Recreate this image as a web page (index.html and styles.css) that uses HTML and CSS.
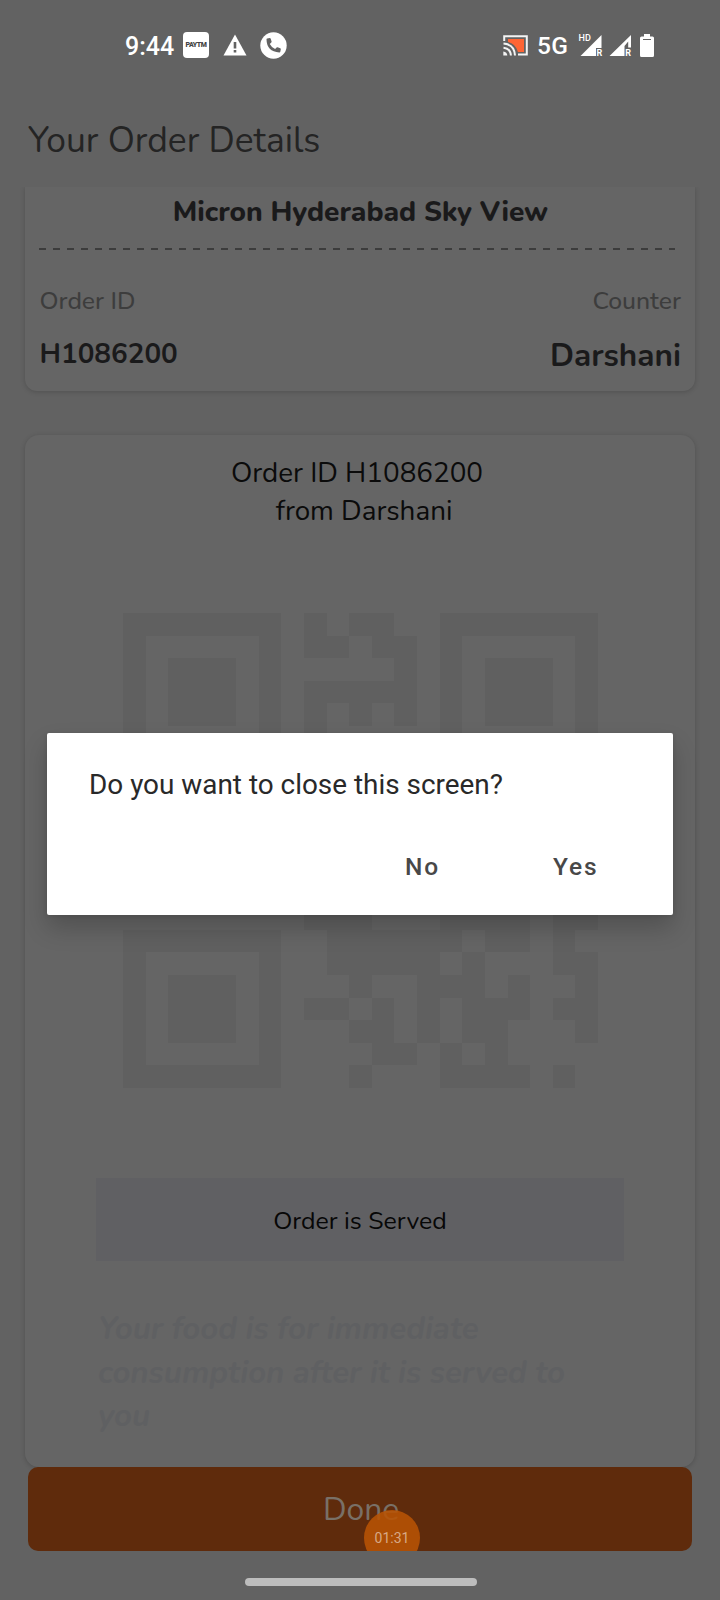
FILE: index.html
```html
<!DOCTYPE html>
<html lang="en">
<head>
<meta charset="utf-8">
<title>Your Order Details</title>
<link rel="stylesheet" href="styles.css">
</head>
<body>
<div class="screen">
  <header class="status">
    <div class="status-left">
      <span class="clock">9:44</span>
      <span class="paytm">Paytm</span>
      <svg class="warn" width="24" height="22" viewBox="0 0 24 22"><path d="M12 .5 23.5 21.500H.5Z" fill="#fff"/><path d="M10.700 8h2.600v6.500h-2.600zM10.700 16h2.600v2.600h-2.600z" fill="#626262"/></svg>
      <svg class="phone" width="27" height="27" viewBox="0 0 27 27"><circle cx="13.500" cy="13.500" r="13.200" fill="#fff"/><path d="M7.200 6.500 9.800 6q.6 0 .8.600l1 2.800q.1.600-.3 1l-1.500 1.500q1.900 3.600 5.300 5.200l1.500-1.600q.5-.4 1-.2l2.700 1q.6.300.5.900l-.5 2.600q-.2.700-.9.700Q6.600 19.500 6.500 7.300q0-.6.700-.8Z" fill="#626262"/></svg>
    </div>
    <div class="status-right">
      <svg class="cast" width="25" height="21" viewBox="0 0 25 21"><path d="M1.200 6V1.200h22.600v18.300H15" fill="none" stroke="#f4f4f4" stroke-width="2"/><path d="M5 4h16v13h-6Q12.500 8.500 5 7Z" fill="#ff6534"/><path d="M.5 8.500q11 1 11.500 12M.5 12.700q7 .8 7.400 7.800" fill="none" stroke="#f4f4f4" stroke-width="2"/><path d="M.3 16.500q3.800.4 4 4h-4Z" fill="#f4f4f4"/></svg>
      <span class="network">5G</span>
      <svg class="signals" width="55" height="24" viewBox="-2 -1 55 24"><path d="M22.500 1v13H17V22H1.500ZM52 1v12.500h-2.800V7.500L45.500 12v10h-15Z" fill="#fff"/><g fill="#fff" font-family="Roboto, sans-serif"><text x="-.5" y="7.300" font-size="9" font-weight="500">HD</text><text x="17.500" y="22" font-size="9" font-weight="700">R</text><text x="46.300" y="22" font-size="9" font-weight="700">R</text></g></svg>
      <svg class="battery" width="14" height="23" viewBox="0 0 14 23"><path d="M4 0h6v2.500h2.500Q14 2.500 14 4v17.500q0 1.500-1.500 1.500h-11Q0 23 0 21.500V4q0-1.500 1.500-1.500H4Z" fill="#fff"/><path d="M3 5.500h8" stroke="#626262"/></svg>
    </div>
  </header>

  <h1 class="title">Your Order Details</h1>

  <section class="card summary">
    <h2 class="venue">Micron Hyderabad Sky View</h2>
    <div class="divider"></div>
    <div class="row labels"><span>Order ID</span><span>Counter</span></div>
    <div class="row values"><span class="order-no">H1086200</span><span class="counter">Darshani</span></div>
  </section>

  <section class="card ticket">
    <p class="heading">Order ID H1086200</p>
    <p class="heading second">from Darshani</p>
    <svg class="qr" viewBox="0 0 21 21" preserveAspectRatio="none" shape-rendering="crispEdges">
      <path fill="#606060" fill-rule="evenodd" d="M0 0h7v7H0ZM1 1v5h5V1ZM2 2h3v3H2ZM14 0h7v7h-7ZM15 1v5h5V1ZM16 2h3v3h-3ZM0 14h7v7H0ZM1 15v5h5v-5ZM2 16h3v3H2Z"/>
      <path fill="#606060" d="M8 0h1v1h1v1H8ZM10 0h2v1h1v4h-1V4h-1v1h-1V4H9v2H8V3h4V2h-1V1h-1ZM8 13h3v1h3v-1h4v2h-2v-1h-1v1h-1v1H9v-2H8ZM19 13h2v1h-1v1h1v4h-1v-1h-1v-1h1v-1h-1ZM15 15h1v2h1v-1h1v2h-1v3h1v0h-4v-2h1v1h1v-1h-1v-2h-1v2h-1v-3h2ZM17 20h1v1h-1ZM10 16h1v1h-1ZM8 17h2v1H8ZM11 17h1v2h1v1h-2v-1h-1v-1h1ZM10 20h1v1h-1ZM19 20h1v1h-1Z"/>
    </svg>
    <div class="served">Order is Served</div>
    <p class="notice">Your food is for immediate<br>consumption after it is served to<br>you</p>
  </section>

  <div class="done">Done<div class="timer">01:31</div></div>
  <div class="home"></div>

  <div class="dialog">
    <p class="question">Do you want to close this screen?</p>
    <div class="actions"><span class="no">No</span><span class="yes">Yes</span></div>
  </div>
</div>
</body>
</html>
```
FILE: styles.css
```css
* { box-sizing: border-box; margin: 0; padding: 0; }
body { background: #626262; }
.screen { position: relative; width: 720px; height: 1600px; overflow: hidden; background: #626262; font-family: Nunito, Lato, sans-serif; white-space: nowrap; }
.status { height: 90px; display: flex; justify-content: space-between; padding: 0 66px 0 125px; color: #fff; font-family: Roboto, sans-serif; }
.status-left, .status-right { display: flex; align-items: center; height: 90px; }
.clock { font-size: 25px; font-weight: 500; width: 58px; padding-top: 2px; }
.paytm { width: 26px; height: 26px; border-radius: 4px; background: #fff; color: #444; font-size: 7px; font-weight: 900; line-height: 26px; text-align: center; letter-spacing: -.4px; text-transform: uppercase; }
.warn { margin-left: 14px; }
.phone { margin-left: 13px; }
.network { font-size: 24.500px; font-weight: 500; width: 40px; margin-left: 9px; padding-top: 1px; letter-spacing: .4px; }
.battery { margin-left: 8px; }
.title { height: 97px; padding-left: 28px; font-size: 35.400px; font-weight: 400; line-height: 101px; color: #242424; }
.card { margin: 0 25px; width: 670px; background: #656565; box-shadow: 0 1px 5px rgba(0,0,0,.18); }
.summary { height: 204px; border-radius: 0 0 12px 12px; padding: 0 14px 0 15px; clip-path: inset(0 -8px -8px -8px); }
.venue { height: 61px; text-align: center; font-size: 28px; line-height: 51px; font-weight: 800; color: #1a1a1b; }
.divider { height: 2px; width: 636px; margin-left: -1px; background: repeating-linear-gradient(90deg, #3c3c3c 0 7px, transparent 7px 14px); }
.row { display: flex; justify-content: space-between; }
.labels { height: 50px; margin-top: 27px; line-height: 48px; font-size: 24.700px; font-weight: 500; color: #3d3d3d; }
.values { height: 50px; line-height: 50px; font-weight: 700; color: #1a1a1b; }
.order-no { font-size: 27.800px; padding-top: 2px; }
.counter { font-size: 31.500px; padding-top: 4px; }
.order-no, .labels span:first-child { margin-left: -.5px; }
.ticket { height: 1032px; margin-top: 44px; border-radius: 14px; display: flex; flex-direction: column; }
.heading { height: 38px; line-height: 38px; margin-top: 19px; padding-right: 6px; text-align: center; font-size: 27.800px; color: #0b0b0b; }
.second { margin-top: 0; padding: 0 0 0 8px; }
.qr { display: block; width: 475px; height: 475px; margin: 83px 0 0 98px; }
.served { width: 528px; height: 83px; margin: 90px 0 0 71px; padding: 2px 0 0; background: #606063; text-align: center; font-size: 24.900px; line-height: 83px; color: #070707; }
.notice { margin: 46px 0 0 73px; font-size: 31.200px; line-height: 43.500px; font-style: italic; font-weight: 700; color: #5f6062; }
.done { position: relative; width: 664px; height: 84px; margin: 0 0 0 28px; border-radius: 10px; overflow: hidden; background: #5f2b0c; color: #797067; font-size: 31.800px; line-height: 85px; text-align: center; padding-left: 2px; }
.timer { position: absolute; left: 336px; top: 43px; width: 56px; height: 56px; border-radius: 50%; background: rgba(184,83,5,.88); color: #d7a985; font: 14px/56px Roboto, sans-serif; }
.home { width: 232px; height: 8px; margin: 27px 0 0 245px; border-radius: 4px; background: #bdbdbd; }
.dialog { position: absolute; left: 47px; top: 733px; width: 626px; height: 182px; border-radius: 2px; background: #fff; box-shadow: 0 13px 24px rgba(0,0,0,.2), 0 1px 5px rgba(0,0,0,.1); font-family: Roboto, sans-serif; }
.question { height: 104px; padding-left: 42px; font-size: 27.900px; line-height: 104px; color: #292929; }
.actions { display: flex; height: 60px; line-height: 60px; font-size: 24.500px; font-weight: 500; letter-spacing: 1.800px; color: #484848; padding-left: 358px; }
.no { width: 148px; }
```
